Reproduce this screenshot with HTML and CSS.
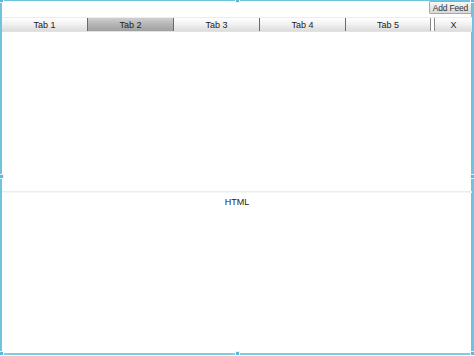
FILE: index.html
```html
<!DOCTYPE html>
<html lang="en">
<head>
    <meta charset="UTF-8">
    <title>Feeds</title>
    <link rel="stylesheet" href="styles.css">
</head>
<body>
    <div class="frame">
        <div class="toolbar">
            <button class="add-feed">Add Feed</button>
        </div>
        <div class="tabs">
            <div class="tab">Tab 1</div>
            <div class="tab selected">Tab 2</div>
            <div class="tab">Tab 3</div>
            <div class="tab">Tab 4</div>
            <div class="tab">Tab 5</div>
            <div class="tab close">X</div>
        </div>
        <div class="pane top-pane"></div>
        <div class="pane bottom-pane">HTML</div>

        <!-- selection handles -->
        <span class="handle h-tl"></span>
        <span class="handle h-tm"></span>
        <span class="handle h-tr"></span>
        <span class="handle h-ml"></span>
        <span class="handle h-mr"></span>
        <span class="handle h-bl"></span>
        <span class="handle h-bm"></span>
        <span class="handle h-br"></span>
    </div>
</body>
</html>
```

FILE: styles.css
```css
body {
    margin: 0;
    padding: 0;
    background-color: #ffffff;
    font-family: "Liberation Sans", Arial, sans-serif;
    font-size: 9px;
    color: #222222;
}
.frame {
    position: relative;
    width: 474px;
    height: 355px;
    box-sizing: border-box;
    border: 2px solid #6cc4dd;
    border-top-width: 1px;
    box-shadow: -1px 0 0 #b0a8b8 inset;
    display: flex;
    flex-direction: column;
    background-color: #ffffff;
    border-bottom-color: #7fcde3;
}
.toolbar {
    display: flex;
    justify-content: flex-end;
    height: 13px;
    padding-bottom: 3px;
}
.add-feed {
    font-family: "Liberation Sans", Arial, sans-serif;
    font-size: 8.5px;
    letter-spacing: -0.2px;
    color: #333333;
    height: 13px;
    width: 43px;
    padding: 0;
    border: 1px solid #a8a8a8;
    border-radius: 1px;
    background: linear-gradient(#f8f8f8, #d8d8d8);
    white-space: nowrap;
}
.tabs {
    display: flex;
    height: 13px;
    border-top: 1px solid #ececec;
    border-bottom: 1px solid #e2e2e2;
}
.tab {
    flex: 0 0 85px;
    display: flex;
    justify-content: center;
    align-items: center;
    border-right: 1px solid #6a6a6a;
    background: linear-gradient(#ffffff, #f2f2f2 45%, #dcdcdc);
}
.tab.selected {
    background: linear-gradient(#d0d0d0, #b4b4b4 50%, #a0a0a0);
    border-left: 1px solid #6a6a6a;
    margin-left: -1px;
    color: #222222;
}
.tab:nth-child(5) {
    flex-basis: 84px;
    border-right: 1px solid #8a8a8a;
    box-shadow: 3px 0 0 #ffffff, 4px 0 0 #8a8a8a;
}
.tab.close {
    flex: 1;
    margin-left: 4px;
    border-right: none;
}
.pane {
    box-sizing: border-box;
}
.top-pane {
    height: 160px;
    border-bottom: 1px solid #ececec;
    box-shadow: 0 1px 0 #f6f6f6;
}
.bottom-pane {
    flex: 1;
    text-align: center;
    padding-top: 5px;
}
.handle {
    position: absolute;
    width: 3px;
    height: 3px;
    background-color: #5fb8d8;
    border: 1px solid #e8f6fb;
}
.h-tl { left: -3px; top: -3px; }
.h-tm { left: 233px; top: -3px; }
.h-tr { right: -3px; top: -3px; }
.h-ml { left: -3px; top: 173px; }
.h-mr { right: -3px; top: 173px; }
.h-bl { left: -3px; bottom: -3px; }
.h-bm { left: 233px; bottom: -3px; }
.h-br { right: -3px; bottom: -3px; }
```
